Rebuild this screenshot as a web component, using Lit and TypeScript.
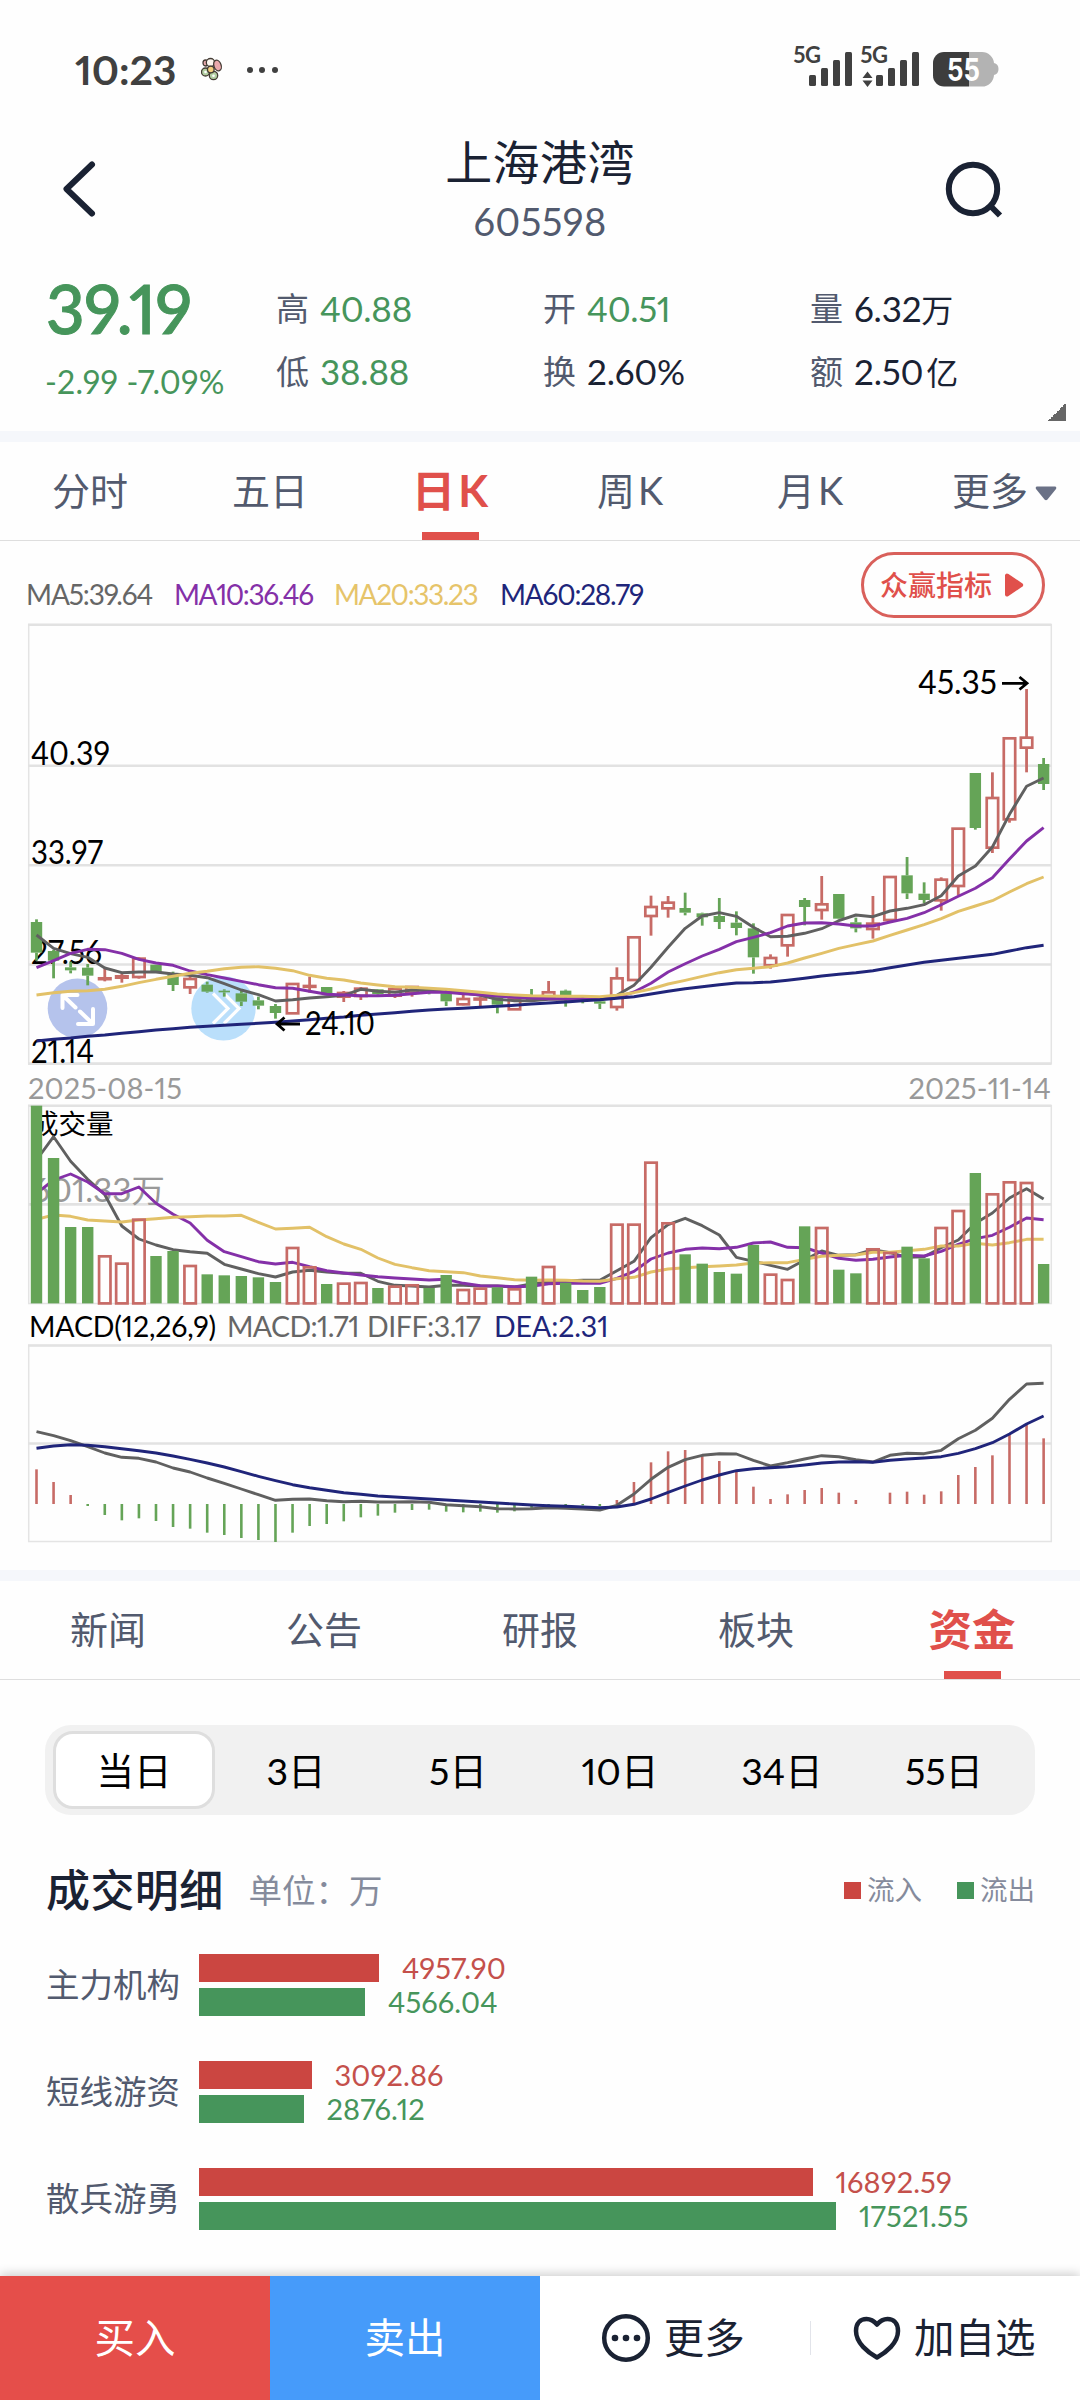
import { LitElement, html, svg, css } from "lit";
import { customElement, property } from "lit/decorators.js";
import { classMap } from "lit/directives/class-map.js";

/* Series are stored in thirds of a pixel, one value per trading day. */
const UNIT = 3;
const FIRST_X = 36.5;
const STEP = 17.07;
const BODY = 11.4;
const xAt = (i: number) => FIRST_X + i * STEP;

/* U = up day, D = down day */
const DAYS =
  "DDDDUUUDDUDDDDDUUDUUDUUDDUUDUDUDDDUUUUDDDDDUUDUDDUUDDUUDUUUD";

/* high, body top, body bottom, low */
const CANDLES: number[][] = [
  [898, 906, 998, 1022], [990, 993, 1022, 1075], [1025, 1042, 1051, 1060], [1032, 1043, 1067, 1096],
  [1045, 1075, 1077, 1084], [1060, 1069, 1073, 1088], [1012, 1016, 1071, 1076], [1034, 1034, 1058, 1058],
  [1055, 1064, 1095, 1113], [1068, 1077, 1102, 1122], [1085, 1094, 1115, 1118], [1108, 1112, 1117, 1130],
  [1113, 1120, 1145, 1158], [1130, 1141, 1157, 1168], [1152, 1158, 1179, 1196], [1090, 1092, 1180, 1182],
  [1070, 1098, 1100, 1118], [1101, 1101, 1122, 1122], [1113, 1119, 1130, 1146], [1101, 1106, 1128, 1140],
  [1107, 1108, 1122, 1124], [1104, 1107, 1127, 1134], [1098, 1101, 1118, 1130], [1103, 1106, 1117, 1123],
  [1104, 1120, 1144, 1158], [1125, 1137, 1153, 1156], [1130, 1136, 1138, 1160], [1125, 1130, 1154, 1180],
  [1128, 1136, 1168, 1170], [1107, 1128, 1140, 1146], [1083, 1117, 1132, 1135], [1109, 1112, 1130, 1160],
  [1125, 1135, 1143, 1150], [1140, 1144, 1151, 1167], [1042, 1075, 1161, 1172], [950, 952, 1080, 1082],
  [827, 861, 888, 947], [828, 848, 865, 893], [818, 864, 878, 886], [878, 880, 892, 917],
  [834, 888, 906, 927], [874, 908, 924, 946], [910, 925, 1012, 1061], [1003, 1014, 1036, 1046],
  [883, 885, 976, 1010], [834, 840, 861, 916], [768, 853, 870, 899], [822, 822, 896, 898],
  [893, 907, 925, 937], [828, 911, 927, 956], [769, 771, 900, 903], [711, 766, 820, 837],
  [787, 821, 840, 850], [772, 779, 841, 872], [624, 626, 798, 825], [459, 459, 624, 629],
  [457, 534, 683, 699], [353, 355, 598, 608], [207, 353, 383, 457], [414, 432, 492, 510],
];

const MA5 = [945, 985, 1001, 1012, 1044, 1058, 1056, 1056, 1062, 1066, 1073, 1091, 1110, 1124, 1143, 1139, 1134, 1130, 1126, 1108, 1114, 1117, 1110, 1112, 1116, 1118, 1126, 1138, 1142, 1142, 1138, 1138, 1138, 1138, 1126, 1096, 1042, 982, 925, 888, 878, 889, 922, 950, 949, 940, 926, 902, 885, 890, 873, 865, 854, 827, 768, 738, 681, 583, 499, 474];
const MA10 = [1043, 1022, 1000, 988, 989, 1000, 1018, 1029, 1036, 1053, 1064, 1074, 1084, 1094, 1103, 1105, 1114, 1123, 1125, 1127, 1127, 1126, 1121, 1117, 1117, 1121, 1124, 1128, 1132, 1134, 1136, 1136, 1136, 1137, 1132, 1116, 1090, 1056, 1031, 1008, 988, 965, 952, 938, 918, 909, 908, 912, 918, 918, 906, 895, 878, 854, 829, 805, 773, 717, 663, 623];
const MA20 = [1125, 1118, 1114, 1112, 1108, 1099, 1088, 1078, 1069, 1060, 1054, 1046, 1042, 1040, 1045, 1052, 1066, 1075, 1080, 1089, 1095, 1100, 1102, 1105, 1108, 1112, 1117, 1122, 1125, 1127, 1128, 1129, 1129, 1130, 1126, 1118, 1107, 1092, 1081, 1069, 1058, 1049, 1045, 1040, 1029, 1014, 1000, 985, 974, 963, 946, 930, 914, 896, 874, 858, 842, 816, 791, 771];
const MA60 = [1263, 1258, 1254, 1249, 1245, 1240, 1235, 1230, 1226, 1222, 1219, 1216, 1213, 1210, 1207, 1203, 1199, 1195, 1191, 1186, 1182, 1178, 1174, 1170, 1167, 1165, 1162, 1159, 1156, 1152, 1149, 1146, 1142, 1139, 1135, 1130, 1122, 1114, 1106, 1100, 1094, 1089, 1088, 1086, 1081, 1075, 1068, 1063, 1058, 1052, 1043, 1035, 1027, 1021, 1015, 1009, 1003, 993, 983, 976];

const VOLUME = [137, 294, 501, 501, 589, 611, 479, 588, 573, 618, 643, 646, 648, 652, 666, 564, 622, 672, 671, 669, 684, 680, 676, 684, 645, 690, 686, 682, 688, 650, 621, 668, 690, 681, 494, 494, 308, 490, 583, 611, 636, 641, 555, 644, 660, 499, 504, 629, 640, 568, 579, 560, 595, 504, 453, 339, 403, 367, 369, 612];
const VOL5 = [300, 230, 304, 358, 404, 498, 537, 555, 569, 575, 580, 613, 627, 641, 651, 636, 631, 636, 640, 640, 664, 676, 678, 681, 676, 676, 678, 678, 681, 672, 665, 663, 661, 661, 632, 604, 533, 494, 475, 497, 525, 592, 604, 616, 628, 600, 573, 586, 584, 569, 578, 592, 590, 563, 540, 490, 459, 414, 386, 417];
const VOL10 = [400, 360, 342, 366, 401, 401, 381, 430, 463, 489, 541, 575, 590, 605, 612, 607, 620, 632, 639, 645, 650, 654, 657, 660, 658, 670, 677, 678, 680, 679, 671, 670, 670, 670, 655, 634, 597, 579, 568, 564, 566, 562, 549, 546, 562, 563, 579, 595, 601, 598, 591, 586, 588, 574, 553, 536, 526, 502, 474, 479];
const VOL20 = [478, 465, 469, 480, 483, 486, 480, 476, 472, 470, 468, 468, 466, 487, 507, 505, 502, 530, 552, 568, 594, 613, 623, 632, 635, 638, 648, 653, 659, 661, 660, 661, 663, 664, 656, 652, 636, 627, 623, 620, 618, 615, 609, 608, 608, 598, 589, 586, 585, 577, 577, 572, 568, 558, 558, 550, 555, 548, 538, 538];

const HIST = [1228, 1266, 1305, 1338, 1365, 1381, 1375, 1383, 1401, 1406, 1418, 1425, 1434, 1440, 1446, 1418, 1398, 1392, 1384, 1372, 1367, 1358, 1350, 1349, 1355, 1357, 1355, 1358, 1354, 1346, 1340, 1337, 1336, 1338, 1320, 1266, 1207, 1174, 1170, 1185, 1203, 1235, 1280, 1317, 1303, 1290, 1284, 1298, 1320, 1332, 1298, 1295, 1304, 1294, 1245, 1221, 1186, 1123, 1094, 1135];
const DIFF = [1115, 1127, 1142, 1160, 1179, 1192, 1195, 1206, 1224, 1236, 1254, 1270, 1287, 1304, 1321, 1318, 1317, 1322, 1325, 1324, 1326, 1326, 1325, 1327, 1334, 1337, 1340, 1346, 1347, 1346, 1343, 1345, 1347, 1350, 1336, 1302, 1258, 1222, 1199, 1186, 1181, 1182, 1201, 1218, 1208, 1197, 1187, 1190, 1199, 1206, 1186, 1180, 1181, 1171, 1136, 1111, 1075, 1018, 972, 970];
const DEA = [1165, 1158, 1154, 1156, 1160, 1166, 1172, 1179, 1188, 1198, 1209, 1221, 1235, 1249, 1262, 1274, 1283, 1291, 1298, 1303, 1308, 1311, 1314, 1317, 1320, 1323, 1326, 1329, 1332, 1335, 1337, 1339, 1341, 1343, 1341, 1333, 1317, 1297, 1278, 1260, 1245, 1232, 1226, 1223, 1220, 1215, 1209, 1206, 1205, 1207, 1201, 1197, 1194, 1190, 1180, 1166, 1148, 1122, 1092, 1068];

const VOL_SHIFT = 44;
const MACD_SHIFT = 284;

const line = (data: number[], shift: number, cls: string) =>
  svg`<polyline class="ln ${cls}" points=${data
    .map((v, i) => `${xAt(i).toFixed(1)},${(v / UNIT - shift).toFixed(1)}`)
    .join(" ")} />`;

@customElement("kline-chart")
export class KlineChart extends LitElement {
  static styles = css`
    :host { display: block; }
    svg { display: block; }
    .frame { fill: none; stroke: #e4e4e4; stroke-width: 1.5; }
    .grid { stroke: #e2e2e2; stroke-width: 2.6; }
    .ln { fill: none; stroke-width: 2.9; stroke-linejoin: round; }
    .g { stroke: #606060; }
    .p { stroke: #8430a8; }
    .y { stroke: #e2c168; }
    .n { stroke: #20257a; }
    .up { fill: none; stroke: #c76b66; stroke-width: 2.7; }
    .upwick { stroke: #c76b66; stroke-width: 2.8; }
    .down { fill: #65a457; }
    .downwick { stroke: #65a457; stroke-width: 2.8; }
    .thin { stroke-width: 2.6; }
    text { font-family: Lato, "Noto Sans CJK SC", sans-serif; font-size: 32px; fill: #000; font-variant-numeric: proportional-nums; }
    .muted { fill: #999; }
    .small { font-size: 27.5px; }
    .dates, .macd {
      display: flex; box-sizing: border-box;
      font-family: Lato, "Noto Sans CJK SC", sans-serif;
      font-variant-numeric: proportional-nums;
      white-space: nowrap; font-size: 29px;
    }
    .dates { height: 36px; line-height: 39px; padding: 0 29px 0 28px; justify-content: space-between; color: #999; letter-spacing: 0.15px; }
    .macd { height: 38px; line-height: 41px; padding-left: 29px; font-size: 28.5px; color: #000; }
    .m1 { width: 198px; letter-spacing: -0.15px; }
    .m2 { width: 140px; color: #666; letter-spacing: -0.6px; }
    .m3 { width: 127px; color: #666; letter-spacing: -0.4px; }
    .m4 { color: #20257a; letter-spacing: -0.1px; }
  `;

  private candle(c: number[], i: number) {
    const [hi, top, bot, lo] = c.map((v) => v / UNIT);
    const x = xAt(i);
    const up = DAYS[i] === "U";
    const wick = up ? "upwick" : "downwick";
    return svg`
      <line class=${wick} x1=${x} x2=${x} y1=${hi} y2=${top} />
      <line class=${wick} x1=${x} x2=${x} y1=${bot} y2=${lo} />
      <rect class=${up ? "up" : "down"} x=${x - BODY / 2} width=${BODY} y=${top} height=${Math.max(bot - top, 0.8)} />`;
  }

  private volumeBar(v: number, i: number) {
    const top = v / UNIT - VOL_SHIFT;
    return svg`<rect class=${DAYS[i] === "U" ? "up" : "down"} x=${xAt(i) - BODY / 2} width=${BODY} y=${top} height=${199.4 - top} />`;
  }

  private histBar(v: number, i: number) {
    const y = v / UNIT - MACD_SHIFT;
    return svg`<line class="thin ${v < 1332 ? "upwick" : "downwick"}" x1=${xAt(i)} x2=${xAt(i)} y1="160" y2=${y} />`;
  }

  private grid(ys: number[]) {
    return ys.map((y) => svg`<line class="grid" x1="28" x2="1051.5" y1=${y} y2=${y} />`);
  }

  private label(x: number, y: number, width: number, value: string, cls = "") {
    return svg`<text class=${cls} x=${x} y=${y} textLength=${width} lengthAdjust="spacingAndGlyphs">${value}</text>`;
  }

  render() {
    return html`
      <svg width="1080" height="448" viewBox="0 0 1080 448">
        <rect class="frame" x="28.7" y="4.7" width="1022.6" height="438.9" />
        ${this.grid([4.8, 145.8, 245.2, 344.5, 443.6])}
        <circle cx="77.5" cy="388.4" r="29.8" fill="#b5c3ec" />
        <circle cx="223.5" cy="388.4" r="32.2" fill="#badffb" />
        <g fill="none" stroke="#fff" stroke-width="4" stroke-linecap="round" stroke-linejoin="round">
          <path d="M62.500 388V375H77.500M63.500 376L75.500 387.500M80 391.500L92 403M93 389V404H78" />
          <path stroke-width="3.2" stroke-linecap="butt" stroke-linejoin="miter" d="M213 373.500L228 388.500L213 403.500M224 373.500L239 388.500L224 403.500" />
        </g>
        ${this.label(31, 145, 79, "40.39")}
        ${this.label(31, 244, 72, "33.97")}
        ${this.label(31, 343.5, 71, "27.56")}
        ${this.label(31, 442.5, 63, "21.14")}
        ${CANDLES.map((c, i) => this.candle(c, i))}
        ${line(MA5, 0, "g")}${line(MA10, 0, "p")}${line(MA20, 0, "y")}${line(MA60, 0, "n")}
        <g fill="none" stroke="#000" stroke-width="2.8">
          <path d="M300 404H277M284.500 397.500L277 404L284.500 410.500" />
          <path d="M1002 63.300H1027M1019.500 57L1027 63.300L1019.500 69.500" />
        </g>
        ${this.label(305, 415, 70, "24.10")}
        ${this.label(918, 74, 79, "45.35")}
      </svg>
      <div class="dates"><span>2025-08-15</span><span>2025-11-14</span></div>
      <svg width="1080" height="202" viewBox="0 0 1080 202">
        <rect class="frame" x="28.7" y="1.700" width="1022.6" height="197.8" />
        ${this.grid([1.8, 100.4])}
        <text class="small" x="31" y="30">成交量</text>
        ${this.label(31, 98, 134, "601.33万", "muted")}
        ${line(VOL5, VOL_SHIFT, "g")}${line(VOL10, VOL_SHIFT, "p")}${line(VOL20, VOL_SHIFT, "y")}
        ${VOLUME.map((v, i) => this.volumeBar(v, i))}
      </svg>
      <div class="macd">
        <span class="m1">MACD(12,26,9)</span><span class="m2">MACD:1.71</span>
        <span class="m3">DIFF:3.17</span><span class="m4">DEA:2.31</span>
      </div>
      <svg width="1080" height="200" viewBox="0 0 1080 200">
        <rect class="frame" x="28.7" y="1.500" width="1022.6" height="196" />
        ${this.grid([1.5, 99.5])}
        ${HIST.map((v, i) => this.histBar(v, i))}
        ${line(DIFF, MACD_SHIFT, "g")}${line(DEA, MACD_SHIFT, "n")}
      </svg>
    `;
  }
}

@customElement("status-bar")
export class StatusBar extends LitElement {
  static styles = css`
    :host { display: flex; height: 110px; padding: 26px 80px 0 75px; box-sizing: border-box; justify-content: space-between; align-items: flex-start; }
    .left { display: flex; align-items: center; height: 88px; }
    .time { font: 700 41px/86px Lato, sans-serif; color: #404040; width: 126px; letter-spacing: -0.1px; font-variant-numeric: proportional-nums; }
    svg { display: block; }
    .net { font: 700 22px Lato, sans-serif; fill: #404040; }
    .level { font: 700 31px Inter, sans-serif; fill: #fff; }
  `;
  private bars(x: number) {
    return [[0, 49, 11], [12, 42, 18], [24, 34, 26], [36, 26, 34]].map(
      ([dx, y, h]) => svg`<rect x=${x + dx} y=${y} width="7" height=${h} rx="1.500" fill="#404040" />`
    );
  }
  render() {
    return html`
      <div class="left">
        <span class="time">10:23</span>
        <svg width="80" height="30" viewBox="0 0 80 30">
          <g stroke="#443b34" stroke-width="1.3">
            <ellipse cx="4.500" cy="8" rx="2.500" ry="3" fill="#e8a9ac" />
            <ellipse cx="9.500" cy="7.500" rx="4.200" ry="4" fill="#fbf6ef" />
            <ellipse cx="16.500" cy="10.500" rx="3.600" ry="5.500" fill="#eaa9ac" transform="rotate(-20 16.500 10.500)" />
            <circle cx="4.500" cy="17" r="4" fill="#b3cfa2" />
            <circle cx="12.500" cy="20.500" r="4.200" fill="#b3cfa2" />
            <circle cx="9.800" cy="14.500" r="3.300" fill="#f3cf7d" />
          </g>
          <circle cx="4.500" cy="17" r="1.300" fill="#fff" /><circle cx="12.500" cy="20.800" r="1.300" fill="#fff" />
          <g fill="#404040"><circle cx="49" cy="15" r="3" /><circle cx="61" cy="15" r="3" /><circle cx="74" cy="15" r="3" /></g>
        </svg>
      </div>
      <svg width="210" height="70" viewBox="0 0 210 70">
        <text class="net" x="3" y="37" textLength="28">5G</text>
        ${this.bars(19)}
        <text class="net" x="70" y="37" textLength="28">5G</text>
        <path fill="#404040" d="M77.500 45.500L82.500 52H72.500ZM77.500 61L72.500 54.500H82.500Z" />
        ${this.bars(86)}
        <path fill="#b3b3b3" d="M179 26H192a12 12 0 0 1 12 11q4.500 1 4.500 6t-4.500 6a12 12 0 0 1 -12 11.500H179Z" />
        <path fill="#3d3d3d" d="M179 26H154a11 11 0 0 0 -11 11V49.500a11 11 0 0 0 11 11H179Z" />
        <text class="level" x="157" y="54.500" textLength="33" lengthAdjust="spacingAndGlyphs">55</text>
      </svg>
    `;
  }
}

@customElement("stock-header")
export class StockHeader extends LitElement {
  static styles = css`
    :host { display: block; font-family: Lato, "Noto Sans CJK SC", sans-serif; white-space: nowrap; font-variant-numeric: proportional-nums; }
    .nav { display: grid; grid-template-columns: 180px 1fr 180px; height: 160px; }
    .nav svg { display: block; }
    .names { display: flex; flex-direction: column; align-items: center; padding-top: 22px; }
    .name { font-size: 47px; line-height: 60px; height: 62px; color: #1a2233; letter-spacing: 0.4px; }
    .code { font-size: 38px; line-height: 54px; color: #525a6e; letter-spacing: 0.4px; }
    .quote { display: grid; grid-template-columns: 276px 267px 267px 1fr; height: 161px; color: #1a2233; }
    .main { padding-left: 46px; color: #46955b; }
    .price { font-size: 67px; font-weight: 500; line-height: 76px; height: 86px; letter-spacing: -0.4px; -webkit-text-stroke: 1px #46955b; }
    .change { font-size: 32px; line-height: 51px; letter-spacing: 0.2px; margin-left: -1px; }
    .col { display: flex; flex-direction: column; padding-top: 8px; }
    .cell { display: flex; height: 63px; line-height: 61px; font-size: 35px; gap: 11px; letter-spacing: -0.2px; }
    .cell .k { font-size: 33px; color: #525a6e; letter-spacing: 0; }
    .green { color: #46955b; }
    .corner { width: 18px; height: 18px; margin: -28px 14px 10px auto; background: linear-gradient(135deg, transparent 50%, #666 50%); }
    .wan { font-size: 32px; }
    .yi { padding-left: 3px; }
  `;
  private cell(k: string, v: string, green = false, unit = "") {
    return html`<div class="cell"><span class="k">${k}</span><span class=${classMap({ green })}>${v}<span class=${classMap({ wan: true, yi: unit === "亿" })}>${unit}</span></span></div>`;
  }
  render() {
    return html`
      <div class="nav">
        <svg width="180" height="160" viewBox="0 0 180 160"><path d="M92 54.500L66.500 79L92 103.500" fill="none" stroke="#1a2233" stroke-width="6" stroke-linecap="round" stroke-linejoin="round" /></svg>
        <div class="names"><div class="name">上海港湾</div><div class="code">605598</div></div>
        <svg width="180" height="160" viewBox="0 0 180 160"><g fill="none" stroke="#1a2233" stroke-width="6"><circle cx="73" cy="79" r="24.200" /><path d="M90.500 96L100 105.500" /></g></svg>
      </div>
      <div class="quote">
        <div class="main"><div class="price">39.19</div><div class="change">-2.99 -7.09%</div></div>
        <div class="col">${this.cell("高", "40.88", true)}${this.cell("低", "38.88", true)}</div>
        <div class="col">${this.cell("开", "40.51", true)}${this.cell("换", "2.60%")}</div>
        <div class="col">${this.cell("量", "6.32", false, "万")}${this.cell("额", "2.50", false, "亿")}</div>
      </div>
      <div class="corner"></div>
    `;
  }
}

@customElement("tab-strip")
export class TabStrip extends LitElement {
  @property({ attribute: false }) tabs: string[] = [];
  @property({ type: Number }) active = 0;
  @property({ type: Boolean }) caret = false;
  static styles = css`
    :host { display: flex; height: 99px; border-bottom: 1.5px solid #dedede; box-sizing: border-box; font-family: Lato, "Noto Sans CJK SC", sans-serif; }
    .tab { flex: 1; display: flex; flex-direction: column; align-items: center; white-space: nowrap; font-size: 38px; line-height: 84px; color: #525a6e; }
    .label { height: 90px; display: flex; align-items: center; box-sizing: border-box; padding-top: 6px; }
    .on { color: #e0504b; font-weight: 700; font-size: 43.5px; }
    .mark { width: 57px; height: 8px; background: #e0504b; }
    .latin { margin-left: 3px; }
    .caret { width: 22px; height: 15px; margin: 6px -29px 0 7px; }
  `;
  private label(t: string) {
    return t.endsWith("K") ? html`${t.slice(0, -1)}<span class="latin">K</span>` : t;
  }
  render() {
    return this.tabs.map((t, i) => {
      const on = i === this.active;
      const caret = this.caret && i === this.tabs.length - 1;
      return html`<div class=${classMap({ tab: true, on })}>
        <span class="label">${this.label(t)}${caret
          ? html`<svg class="caret" viewBox="0 0 22 15"><path fill="#6a7186" d="M2 0.500H20Q22 1 21 3L12.500 13.500Q11 15 9.500 13.500L1 3Q0 1 2 0.500Z" /></svg>`
          : ""}</span>
        ${on ? html`<span class="mark"></span>` : ""}
      </div>`;
    });
  }
}

interface Flow { name: string; inflow: string; outflow: string; inW: number; outW: number; }

const FLOWS: Flow[] = [
  { name: "主力机构", inflow: "4957.90", outflow: "4566.04", inW: 180, outW: 166 },
  { name: "短线游资", inflow: "3092.86", outflow: "2876.12", inW: 112.5, outW: 104.5 },
  { name: "散兵游勇", inflow: "16892.59", outflow: "17521.55", inW: 613.5, outW: 637 },
];

@customElement("fund-panel")
export class FundPanel extends LitElement {
  static styles = css`
    :host { display: block; padding: 45px 45px 0; font-family: Lato, "Noto Sans CJK SC", sans-serif; white-space: nowrap; font-variant-numeric: proportional-nums; }
    .seg { display: grid; grid-template-columns: repeat(6, 162px); height: 90px; padding: 6px 8px; box-sizing: border-box; background: #f1f1f1; border-radius: 26px; }
    .seg span { display: flex; align-items: center; justify-content: center; font-size: 37.5px; color: #000; border-radius: 20px; box-sizing: border-box; border: 3px solid transparent; padding-bottom: 3px; }
    .seg .on { background: #fff; border-color: #dedede; }
    .head { display: flex; align-items: center; height: 60px; margin-top: 45px; }
    .title { font-size: 44px; font-weight: 500; color: #1a2233; line-height: 60px; padding-left: 1px; letter-spacing: 0.4px; }
    .unit { font-size: 33.500px; color: #858b9c; margin-left: 25px; flex: 1; line-height: 60px; }
    .key { display: flex; align-items: center; font-size: 27.5px; color: #858b9c; gap: 6px; margin-left: 35px; line-height: 60px; }
    .sq { width: 17px; height: 17px; }
    .in { background: #cb4641; }
    .out { background: #46955b; }
    .flows { display: flex; flex-direction: column; gap: 45px; padding-top: 34px; }
    .flow { display: grid; grid-template-columns: 154px 1fr; height: 62px; align-items: center; }
    .name { font-size: 33.5px; color: #525a6e; line-height: 60px; height: 62px; padding-left: 1px; }
    .bars { display: flex; flex-direction: column; gap: 6px; }
    .row { display: flex; height: 28px; align-items: center; gap: 23px; font-size: 29px; line-height: 28px; letter-spacing: 0.1px; }
    .bar { height: 28px; }
    .tin { color: #c4504b; }
    .tout { color: #46955b; }
  `;
  render() {
    return html`
      <div class="seg">${["当日", "3日", "5日", "10日", "34日", "55日"].map((t, i) => html`<span class=${classMap({ on: i === 0 })}>${t}</span>`)}</div>
      <div class="head">
        <span class="title">成交明细</span><span class="unit">单位：万</span>
        <span class="key"><i class="sq in"></i>流入</span><span class="key"><i class="sq out"></i>流出</span>
      </div>
      <div class="flows">
        ${FLOWS.map((f) => html`<div class="flow">
          <span class="name">${f.name}</span>
          <div class="bars">
            <div class="row tin"><i class="bar in" style="width:${f.inW}px"></i>${f.inflow}</div>
            <div class="row tout"><i class="bar out" style="width:${f.outW}px"></i>${f.outflow}</div>
          </div>
        </div>`)}
      </div>
    `;
  }
}

@customElement("app-root")
export class AppRoot extends LitElement {
  static styles = css`
    :host { display: flex; flex-direction: column; width: 1080px; height: 2400px; overflow: hidden; background: #fefefe; font-family: Lato, "Noto Sans CJK SC", sans-serif; font-variant-numeric: proportional-nums; }
    .band { height: 11px; flex: none; background: #f5f7fb; }
    .legend { display: flex; align-items: center; height: 79px; flex: none; font-size: 28px; padding: 0 35px 0 26px; box-sizing: border-box; white-space: nowrap; }
    .legend span { padding-top: 27px; }
    .l5 { color: #666; width: 148px; letter-spacing: -1.1px; }
    .l10 { color: #8430a8; width: 160px; letter-spacing: -1.4px; }
    .l20 { color: #e6c46a; width: 166px; letter-spacing: -1.4px; }
    .l60 { color: #20257a; flex: 1; letter-spacing: -1.2px; }
    .pill { display: flex; align-items: center; gap: 13px; width: 184px; height: 66px; box-sizing: border-box; border: 3px solid #d9605b; border-radius: 33px; padding-left: 16px; margin-top: 8px; color: #e0504b; font-size: 28px; font-weight: 500; line-height: 60px; }
    .pill svg { display: block; }
    .grow { flex: 1; }
    .bottom { display: grid; grid-template-columns: 270px 270px 1fr 1px 1fr; height: 124px; flex: none; background: #fff; box-shadow: 0 -2px 10px rgba(0, 0, 0, 0.2); font-size: 40.5px; line-height: 122px; color: #1a2233; white-space: nowrap; }
    .bottom div { display: flex; align-items: center; justify-content: center; }
    .bottom .buy { background: #e54e4a; color: #fff; }
    .bottom .sell { background: #469bfa; color: #fff; }
    .bottom .more { gap: 13px; padding-right: 4px; }
    .bottom .fav { gap: 12px; padding-right: 3px; }
    .bottom .sep { height: 34px; align-self: center; background: #e2e4ea; }
    .bottom svg { display: block; flex: none; }
    .chart { height: 950px; flex: none; }
  `;
  render() {
    return html`
      <status-bar></status-bar>
      <stock-header></stock-header>
      <div class="band"></div>
      <tab-strip .tabs=${["分时", "五日", "日K", "周K", "月K", "更多"]} active="2" caret></tab-strip>
      <div class="legend">
        <span class="l5">MA5:39.64</span><span class="l10">MA10:36.46</span><span class="l20">MA20:33.23</span><span class="l60">MA60:28.79</span>
        <div class="pill">众赢指标<svg width="19" height="24" viewBox="0 0 19 24"><path fill="#e0504b" d="M0 2Q1 -0.500 3.500 1L17.500 10.500Q19 12 17.500 13.500L3.500 23Q1 24.500 0 22Z" /></svg></div>
      </div>
      <kline-chart class="chart"></kline-chart>
      <div class="band"></div>
      <tab-strip .tabs=${["新闻", "公告", "研报", "板块", "资金"]} active="4"></tab-strip>
      <fund-panel></fund-panel>
      <div class="grow"></div>
      <div class="bottom">
        <div class="buy">买入</div>
        <div class="sell">卖出</div>
        <div class="more">
          <svg width="50" height="50" viewBox="0 0 50 50"><circle cx="25" cy="25" r="21.800" fill="none" stroke="#1a2233" stroke-width="4.500" /><g fill="#1a2233"><circle cx="14" cy="25" r="3.300" /><circle cx="25" cy="25" r="3.300" /><circle cx="36" cy="25" r="3.300" /></g></svg>更多
        </div>
        <div class="sep"></div>
        <div class="fav">
          <svg width="50" height="46" viewBox="0 0 50 46"><path d="M25 42.500C16 37.500 4 28 4 16C4 8 8.500 4 14.500 4C19.500 4 22 6 25 9.500C28 6 30.500 4 35.500 4C41.500 4 46 8 46 16C46 28 34 37.500 25 42.500Z" fill="none" stroke="#1a2233" stroke-width="4.500" stroke-linejoin="round" /></svg>加自选
        </div>
      </div>
    `;
  }
}
